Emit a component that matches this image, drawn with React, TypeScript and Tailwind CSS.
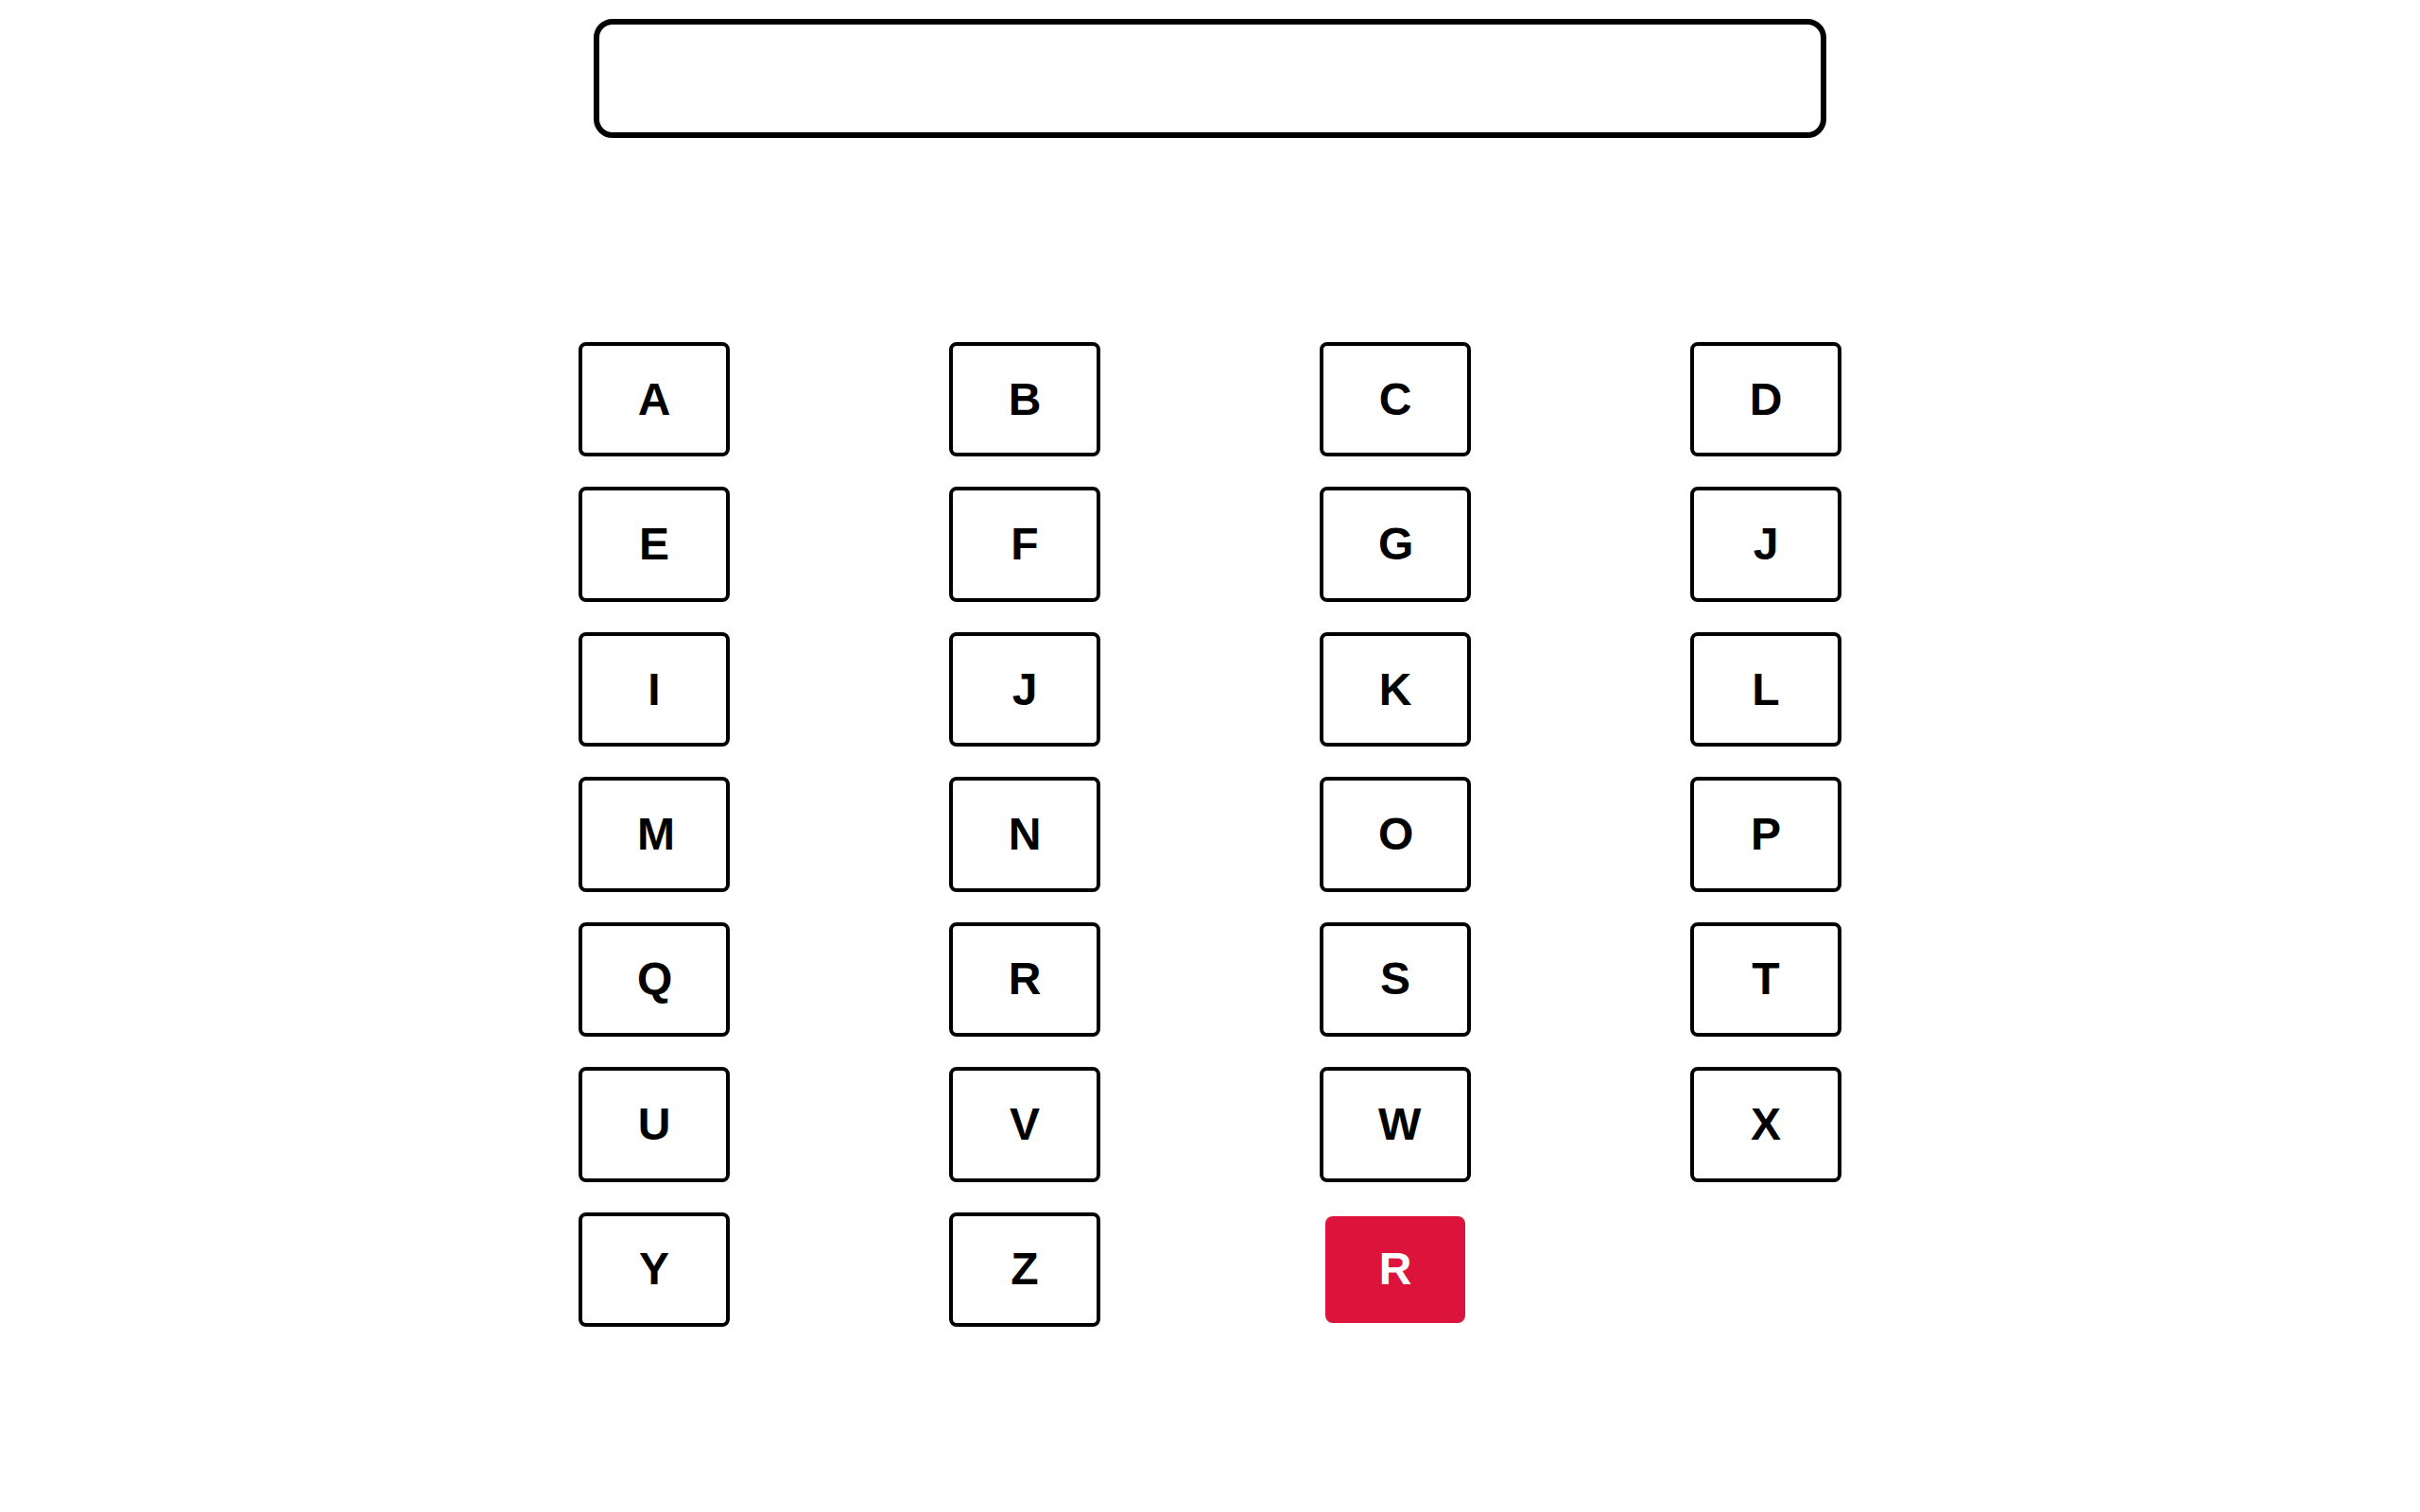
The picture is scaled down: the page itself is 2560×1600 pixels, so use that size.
import { useState } from "react";

const LETTERS = [
  "A", "B", "C", "D",
  "E", "F", "G", "J",
  "I", "J", "K", "L",
  "M", "N", "O", "P",
  "Q", "R", "S", "T",
  "U", "V", "W", "X",
  "Y", "Z",
];

export default function App() {
  const [text, setText] = useState("");

  return (
    <main className="flex min-h-screen flex-col items-center bg-white pt-5 font-['Liberation_Sans',Arial,sans-serif] text-5xl font-bold text-black">
      <input
        type="text"
        readOnly
        aria-label="Typed letters"
        value={text}
        className="h-[126px] w-full max-w-[1304px] rounded-[20px] border-6 border-black bg-white px-8 outline-none"
      />
      <div className="mt-[216px] grid min-h-[1042px] w-full max-w-[1336px] auto-rows-fr grid-cols-[repeat(4,160px)] justify-between gap-y-8">
        {LETTERS.map((letter, index) => (
          <button
            key={index}
            type="button"
            onClick={() => setText((current) => current + letter)}
            className="rounded-lg border-4 border-black bg-white px-[58px]"
          >
            {letter}
          </button>
        ))}
        <button
          type="button"
          title="Reset"
          onClick={() => setText("")}
          className="mx-1.5 my-1 rounded-lg bg-[#dc143c] text-white"
        >
          R
        </button>
      </div>
    </main>
  );
}
